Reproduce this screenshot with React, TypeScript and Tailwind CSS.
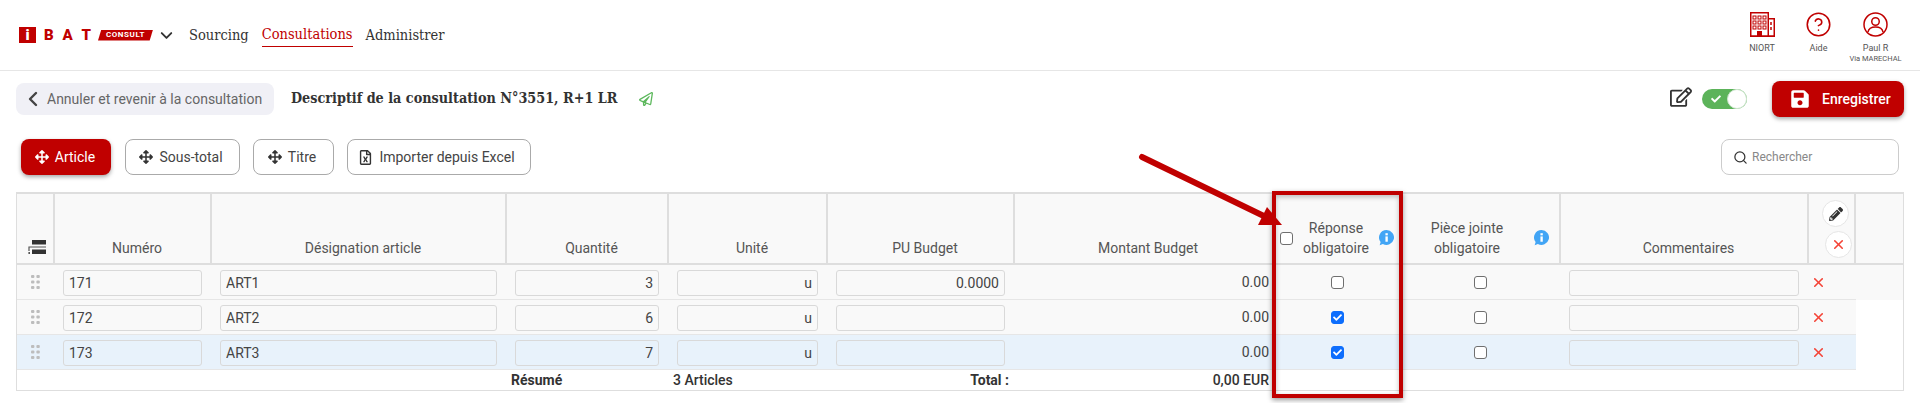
import React from 'react';
import { ChevronDown, ChevronLeft, CircleHelp, Search, X } from 'lucide-react';
import { FaArrowsAlt, FaCheck, FaPencilAlt, FaRegEdit, FaRegFileExcel, FaRegPaperPlane, FaSave } from 'react-icons/fa';

const colWidths = [38, 157, 295, 162, 159, 187, 259, 129, 158, 248, 47, 47];

const rows = [
  { num: '171', name: 'ART1', qty: '3', pu: '0.0000', required: false, selected: false },
  { num: '172', name: 'ART2', qty: '6', pu: '', required: true, selected: false },
  { num: '173', name: 'ART3', qty: '7', pu: '', required: true, selected: true },
];

const Building = () => (
  <svg width="25" height="25" viewBox="0 0 25 25" fill="none" stroke="#c00000">
    <rect x="0.75" y="0.75" width="17.5" height="23.5" strokeWidth="1.5" />
    <path d="M18.5 6.75h5.75v17.5H18.5" strokeWidth="1.5" />
    <path d="M0 24.25h25" strokeWidth="1.5" />
    {[3, 8, 13].map((x) =>
      [4, 9, 14].map((y) => <rect key={`${x}-${y}`} x={x} y={y} width="3" height="3" strokeWidth="1" />)
    )}
    <rect x="7" y="19" width="5" height="5" fill="#c00000" stroke="none" />
    <path d="M21 10v3M21 15v3" strokeWidth="1.5" />
  </svg>
);

const UserRound = () => (
  <svg width="25" height="25" viewBox="0 0 25 25" fill="none" stroke="#c00000" strokeWidth="1.5">
    <circle cx="12.5" cy="12.5" r="11.5" />
    <circle cx="12.5" cy="9.5" r="3.75" />
    <path d="M5 20c.6-3.6 3.2-5 7.5-5s6.9 1.4 7.5 5" />
  </svg>
);

const StackIcon = () => (
  <svg width="19" height="15" viewBox="0 0 19 15">
    <rect x="4" y="0" width="14" height="4.5" fill="#333" />
    <path d="M1 11V7h17" fill="none" stroke="#555" strokeWidth="1.2" />
    <rect x="4" y="9.5" width="14" height="4.5" fill="#333" />
    <rect x="0.4" y="12" width="1.6" height="2" fill="#555" />
  </svg>
);

const GripDots = () => (
  <svg width="9" height="14" viewBox="0 0 9 14" fill="#bdbdbd">
    {[0, 5.5, 11].map((y) => (
      <g key={y}>
        <rect x="0" y={y} width="3.4" height="3" rx="1" />
        <rect x="5.4" y={y} width="3.4" height="3" rx="1" />
      </g>
    ))}
  </svg>
);

const InfoBubble = () => (
  <svg width="15" height="16" viewBox="0 0 14 15">
    <path d="M7 0a7 7 0 1 1-3.4 13.1L.6 14.4l.9-3.1A7 7 0 0 1 7 0z" fill="#42a5f5" />
    <rect x="6" y="6" width="2.2" height="5" fill="#fff" />
    <rect x="6" y="3" width="2.2" height="2" fill="#fff" />
  </svg>
);

const Checkbox = ({ checked = false }: { checked?: boolean }) => (
  <span className="relative inline-flex h-[13px] w-[13px] align-middle">
    <input
      type="checkbox"
      defaultChecked={checked}
      className="peer h-[13px] w-[13px] appearance-none rounded-[3px] border border-[#6f6f6f] bg-white checked:border-[#0d6efd] checked:bg-[#0d6efd]"
    />
    {checked && <FaCheck className="pointer-events-none absolute left-[2px] top-[2px] text-white" size={9} />}
  </span>
);

const Field = ({ value, right }: { value: string; right?: boolean }) => (
  <input
    readOnly
    value={value}
    className={`h-[26px] w-full rounded-[3px] border border-[#d9d9d9] bg-transparent px-[5px] text-[14px] text-[#444] outline-none ${
      right ? 'text-right' : ''
    }`}
  />
);

const ToolButton = ({ label, width }: { label: string; width: string }) => (
  <button className={`flex h-[36px] items-center justify-center gap-[6px] rounded-lg border border-[#aaa] bg-white pr-[3px] text-[14px] text-[#444] ${width}`}>
    <FaArrowsAlt size={14} className="text-[#333]" />
    {label}
  </button>
);

const thBase = 'border-r-2 border-b-2 border-[#dedede] pb-[5px] pl-[9px] align-bottom text-[14px] font-normal leading-5 text-[#555]';
const inputCell = 'pl-2 pr-[10px] align-top pt-[5px]';

const App = () => {
  return (
    <div className="relative h-[403px] w-full overflow-hidden bg-white font-['Roboto',sans-serif]">
      {/* top bar */}
      <div className="flex h-[71px] items-center justify-between border-b border-[#e6e6e6] pl-[19px]">
        <div className="flex items-center">
          <span className="flex h-[16px] w-[17px] items-center justify-center bg-[#c00000] text-[15px] font-black text-white">i</span>
          <span className="ml-[8px] w-[47px] text-[15px] leading-none font-black text-[#c00000] flex justify-between">
            <span>B</span>
            <span>A</span>
            <span>T</span>
          </span>
          <span className="ml-[7px] flex h-[11px] w-[55px] items-center justify-center bg-[#c00000] text-[8px] font-bold tracking-[0.6px] text-white [clip-path:polygon(6%_0,100%_0,94%_100%,0_100%)]">
            CONSULT
          </span>
          <ChevronDown size={19} strokeWidth={2.4} className="ml-[4px] text-[#333]" />
          <nav className="ml-[13px] mt-px flex items-center gap-[13px] font-['DejaVu_Serif_Condensed','DejaVu_Serif',serif] text-[14.5px] text-[#333]">
            <a>Sourcing</a>
            <a className="border-b border-[#c00000] text-[#c00000]">Consultations</a>
            <a>Administrer</a>
          </nav>
        </div>
        <div className="flex items-start pr-[16px] pt-[6px] text-center text-[9px] leading-none text-[#555]">
          <div className="flex w-[57px] flex-col items-center pl-[1px]">
            <Building />
            <span className="mt-[7px]">NIORT</span>
          </div>
          <div className="flex w-[57px] flex-col items-center">
            <CircleHelp size={27} strokeWidth={1.4} className="-m-px text-[#c00000]" />
            <span className="mt-[7px]">Aide</span>
          </div>
          <div className="flex w-[57px] flex-col items-center">
            <UserRound />
            <span className="mt-[7px]">Paul R</span>
            <span className="whitespace-nowrap text-[7.5px] leading-[12px]">Via MARECHAL</span>
          </div>
        </div>
      </div>

      {/* title row */}
      <div className="mt-[10px] flex h-[36px] items-center pl-[16px] pr-[16px]">
        <div className="flex h-[32px] w-[258px] items-center gap-[2px] rounded-lg bg-[#f0f0f6] pl-[5px] text-[14px] text-[#666]">
          <ChevronLeft size={24} strokeWidth={2.4} className="text-[#444]" />
          Annuler et revenir à la consultation
        </div>
        <h1 className="ml-[17px] font-['DejaVu_Serif_Condensed','DejaVu_Serif',serif] text-[14.25px] font-bold text-[#333]">
          Descriptif de la consultation N°3551, R+1 LR
        </h1>
        <FaRegPaperPlane size={14} className="ml-[22px] text-[#5cb85c]" />
        <div className="ml-auto flex items-center">
          <FaRegEdit size={22} className="-mt-[4px] text-[#333]" />
          <div className="ml-[10px] flex h-[20px] w-[45px] items-center justify-between rounded-full bg-[#5cb35a] pl-[9px]">
            <FaCheck size={10} className="text-white" />
            <span className="h-[20px] w-[20px] rounded-full border border-[#cfe6cf] bg-white" />
          </div>
          <button className="ml-[25px] flex h-[36px] w-[132px] items-center rounded-lg bg-[#c00000] pl-[18px] text-[14px] font-medium text-white shadow-[0_2px_4px_rgba(0,0,0,0.35)]">
            <FaSave size={20} />
            <span className="ml-[12px]">Enregistrer</span>
          </button>
        </div>
      </div>

      {/* toolbar */}
      <div className="mt-[22px] flex items-center pl-[21px] pr-[21px]">
        <button className="flex h-[36px] w-[90px] items-center justify-center gap-[6px] rounded-lg bg-[#c00000] pr-[2px] text-[14px] text-white shadow-[0_2px_4px_rgba(0,0,0,0.35)]">
          <FaArrowsAlt size={14} />
          Article
        </button>
        <div className="ml-[14px]">
          <ToolButton label="Sous-total" width="w-[115px]" />
        </div>
        <div className="ml-[13px]">
          <ToolButton label="Titre" width="w-[81px]" />
        </div>
        <button className="ml-[13px] flex h-[36px] w-[184px] items-center justify-center gap-[6px] rounded-lg border border-[#aaa] bg-white pr-[5px] text-[14px] text-[#444]">
          <FaRegFileExcel size={15} className="text-[#333]" />
          Importer depuis Excel
        </button>
        <div className="ml-auto flex h-[36px] w-[178px] items-center gap-[4px] rounded-lg border border-[#ccc] pl-[11px] text-[12px] text-[#888]">
          <Search size={15} className="text-[#333]" />
          Rechercher
        </div>
      </div>

      {/* table */}
      <div className="ml-[16px] mt-[17px] w-[1888px] border-x border-b border-t-2 border-[#dedede]">
        <table className="w-[1886px] table-fixed border-separate border-spacing-0">
          <colgroup>
            {colWidths.map((w, i) => (
              <col key={i} style={{ width: w }} />
            ))}
          </colgroup>
          <thead>
            <tr className="h-[71px] bg-[#f9f9f9]">
              <th className="border-r-2 border-b-2 border-[#dedede] pb-[8px] pl-[11px] text-left align-bottom">
                <StackIcon />
              </th>
              <th className={thBase}>Numéro</th>
              <th className={thBase}>Désignation article</th>
              <th className={thBase}>Quantité</th>
              <th className={thBase}>Unité</th>
              <th className={thBase}>PU Budget</th>
              <th className={thBase}>Montant Budget</th>
              <th className="border-r-2 border-b-2 border-[#dedede] pb-[5px] align-bottom text-[14px] font-normal leading-5 text-[#555]">
                <div className="flex items-center pl-[6px]">
                  <Checkbox />
                  <span className="w-[86px] text-center">
                    Réponse
                    <br />
                    obligatoire
                  </span>
                  <InfoBubble />
                </div>
              </th>
              <th className="border-r-2 border-b-2 border-[#dedede] pb-[5px] align-bottom text-[14px] font-normal leading-5 text-[#555]">
                <div className="flex items-center pl-[24px]">
                  <span className="w-[80px] text-center">
                    Pièce jointe
                    <br />
                    obligatoire
                  </span>
                  <span className="ml-[27px]">
                    <InfoBubble />
                  </span>
                </div>
              </th>
              <th className={thBase}>Commentaires</th>
              <th className="border-r-2 border-b-2 border-[#dedede] pt-[6px] align-top">
                <div className="flex flex-col gap-[4px]">
                  <span className="ml-[13px] flex h-[27px] w-[27px] items-center justify-center rounded-full border border-[#e6e6e6] bg-white">
                    <FaPencilAlt size={14} className="text-[#333]" />
                  </span>
                  <span className="ml-[16px] flex h-[27px] w-[27px] items-center justify-center rounded-full border border-[#e6e6e6] bg-white">
                    <X size={15} strokeWidth={2.5} className="text-[#f44336]" />
                  </span>
                </div>
              </th>
              <th className="border-b-2 border-[#dedede]" />
            </tr>
          </thead>
          <tbody>
            {rows.map((row, i) => {
              const cell = `h-[35px] border-b border-[#e6e6e6] ${row.selected ? 'bg-[#e8f2fb]' : 'bg-[#f9f9f9]'}`;
              return (
                <tr key={row.num}>
                  <td className={`${cell} pl-[14px] align-middle`}>
                    <GripDots />
                  </td>
                  <td className={`${cell} ${inputCell}`}><Field value={row.num} /></td>
                  <td className={`${cell} ${inputCell}`}><Field value={row.name} /></td>
                  <td className={`${cell} ${inputCell}`}><Field value={row.qty} right /></td>
                  <td className={`${cell} ${inputCell}`}><Field value="u" right /></td>
                  <td className={`${cell} ${inputCell}`}><Field value={row.pu} right /></td>
                  <td className={`${cell} pr-[5px] text-right text-[14px] text-[#444]`}>0.00</td>
                  <td className={`${cell} pr-[2px] text-center`}><Checkbox checked={row.required} /></td>
                  <td className={`${cell} pr-[3px] text-center`}><Checkbox /></td>
                  <td className={`${cell} ${inputCell}`}><Field value="" /></td>
                  <td className={`${cell} pl-[2px]`}>
                    <X size={15} strokeWidth={2.5} className="text-[#f44336]" />
                  </td>
                  <td className={i === 0 ? 'bg-[#f9f9f9]' : ''} />
                </tr>
              );
            })}
            <tr className="h-[20px] text-[14px] leading-5 text-[#333]">
              <td colSpan={3} />
              <td className="pl-1 font-bold">Résumé</td>
              <td className="pl-1 font-medium">3 Articles</td>
              <td className="pr-[6px] text-right font-bold">Total :</td>
              <td className="pr-[5px] text-right font-medium">0,00 EUR</td>
              <td colSpan={5} />
            </tr>
          </tbody>
        </table>
      </div>

      {/* annotation drawn over the capture */}
      <div className="pointer-events-none absolute left-[1272px] top-[191px] h-[207px] w-[131px] border-4 border-[#c00000] shadow-[0_2px_5px_rgba(0,0,0,0.4),inset_0_2px_5px_rgba(0,0,0,0.25)]" />
      <svg className="pointer-events-none absolute left-[1135px] top-[150px]" width="155" height="85" viewBox="0 0 155 85">
        <path d="M7 7L135 69" stroke="#c00000" strokeWidth="6" strokeLinecap="round" />
        <path d="M132 57L147 75L123 75Z" fill="#c00000" />
      </svg>
    </div>
  );
};

export default App;
